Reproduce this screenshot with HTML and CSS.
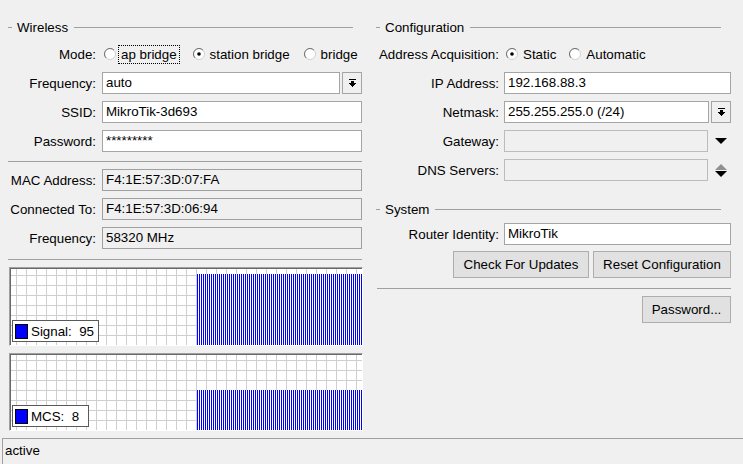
FILE: index.html
```html
<!DOCTYPE html>
<html>
<head>
<meta charset="utf-8">
<link rel="stylesheet" href="styles.css">
</head>
<body>
<div class="app">
  <div class="main">
    <div class="col col-left">
      <div class="group group-left"><span>Wireless</span></div>
      <div class="row row-radios">
        <div class="label">Mode:</div>
        <div class="radios">
          <div class="opt">
            <svg class="radio" viewBox="0 0 12 12" width="12" height="12"><circle cx="6" cy="6" r="5.5" fill="#fff" stroke="#d0d0d0"/><path d="M2.1 9.9A5.5 5.5 0 0 1 9.9 2.1" fill="none" stroke="#707070"/></svg>
            <span class="focus">ap bridge</span>
          </div>
          <div class="opt">
            <svg class="radio" viewBox="0 0 12 12" width="12" height="12"><circle cx="6" cy="6" r="5.5" fill="#fff" stroke="#d0d0d0"/><path d="M2.1 9.9A5.5 5.5 0 0 1 9.9 2.1" fill="none" stroke="#707070"/><circle cx="6" cy="6" r="1.8" fill="#000"/></svg>
            <span>station bridge</span>
          </div>
          <div class="opt">
            <svg class="radio" viewBox="0 0 12 12" width="12" height="12"><circle cx="6" cy="6" r="5.5" fill="#fff" stroke="#d0d0d0"/><path d="M2.1 9.9A5.5 5.5 0 0 1 9.9 2.1" fill="none" stroke="#707070"/></svg>
            <span>bridge</span>
          </div>
        </div>
      </div>
      <div class="row row-first">
        <div class="label">Frequency:</div>
        <div class="field">auto</div>
        <div class="dd"><svg width="7" height="8" viewBox="0 0 7 8" shape-rendering="crispEdges"><rect x="0" y="0" width="7" height="1"/><rect x="2" y="2" width="3" height="2"/><path d="M0 4H7V5H6V6H5V7H4V8H3V7H2V6H1V5H0Z"/></svg></div>
      </div>
      <div class="row">
        <div class="label">SSID:</div>
        <div class="field">MikroTik-3d693</div>
      </div>
      <div class="row">
        <div class="label">Password:</div>
        <div class="field">*********</div>
      </div>
      <div class="sep sep-a"></div>
      <div class="row">
        <div class="label">MAC Address:</div>
        <div class="field ro">F4:1E:57:3D:07:FA</div>
      </div>
      <div class="row">
        <div class="label">Connected To:</div>
        <div class="field ro">F4:1E:57:3D:06:94</div>
      </div>
      <div class="row">
        <div class="label">Frequency:</div>
        <div class="field ro">58320 MHz</div>
      </div>
      <div class="sep sep-b"></div>
      <div class="graph graph-1">
        <div class="bars" style="height:71px"></div>
        <div class="legend legend-signal"><span class="swatch"></span><span>Signal:  95</span></div>
      </div>
      <div class="graph graph-2">
        <div class="bars" style="height:40px"></div>
        <div class="legend legend-mcs"><span class="swatch"></span><span>MCS:  8</span></div>
      </div>
    </div>

    <div class="col col-right">
      <div class="group group-right"><span>Configuration</span></div>
      <div class="row row-radios">
        <div class="label label-r">Address Acquisition:</div>
        <div class="radios radios-r">
          <div class="opt">
            <svg class="radio" viewBox="0 0 12 12" width="12" height="12"><circle cx="6" cy="6" r="5.5" fill="#fff" stroke="#d0d0d0"/><path d="M2.1 9.9A5.5 5.5 0 0 1 9.9 2.1" fill="none" stroke="#707070"/><circle cx="6" cy="6" r="1.8" fill="#000"/></svg>
            <span>Static</span>
          </div>
          <div class="opt">
            <svg class="radio" viewBox="0 0 12 12" width="12" height="12"><circle cx="6" cy="6" r="5.5" fill="#fff" stroke="#d0d0d0"/><path d="M2.1 9.9A5.5 5.5 0 0 1 9.9 2.1" fill="none" stroke="#707070"/></svg>
            <span>Automatic</span>
          </div>
        </div>
      </div>
      <div class="row row-first">
        <div class="label label-r">IP Address:</div>
        <div class="field">192.168.88.3</div>
      </div>
      <div class="row">
        <div class="label label-r">Netmask:</div>
        <div class="field">255.255.255.0 (/24)</div>
        <div class="dd"><svg width="7" height="8" viewBox="0 0 7 8" shape-rendering="crispEdges"><rect x="0" y="0" width="7" height="1"/><rect x="2" y="2" width="3" height="2"/><path d="M0 4H7V5H6V6H5V7H4V8H3V7H2V6H1V5H0Z"/></svg></div>
      </div>
      <div class="row">
        <div class="label label-r">Gateway:</div>
        <div class="field dis"></div>
        <div class="arrows"><svg width="12" height="6" viewBox="0 0 12 6"><path d="M0 0H12L6 6Z"/></svg></div>
      </div>
      <div class="row">
        <div class="label label-r">DNS Servers:</div>
        <div class="field dis"></div>
        <div class="arrows arrows-2">
          <svg width="12" height="6" viewBox="0 0 12 6"><path d="M0 6H12L6 0Z" fill="#909090"/></svg>
          <svg width="12" height="6" viewBox="0 0 12 6"><path d="M0 0H12L6 6Z"/></svg>
        </div>
      </div>
      <div class="group group-right group-system"><span>System</span></div>
      <div class="row">
        <div class="label label-r">Router Identity:</div>
        <div class="field">MikroTik</div>
      </div>
      <div class="btnrow btnrow-a">
        <div class="btn btn-check">Check For Updates</div>
        <div class="btn btn-reset">Reset Configuration</div>
      </div>
      <div class="sep sep-r"></div>
      <div class="btnrow btnrow-b">
        <div class="btn btn-pass">Password...</div>
      </div>
    </div>
  </div>
  <div class="status">active</div>
</div>
</body>
</html>
```

FILE: styles.css
```css
* { box-sizing: border-box; }
html, body { margin: 0; padding: 0; }
body {
  background: #f0f0f0;
  font-family: "Liberation Sans", Arial, sans-serif;
  font-size: 13.33px;
  color: #000;
  width: 743px;
  height: 464px;
  overflow: hidden;
}
.app { display: flex; flex-direction: column; height: 464px; }
.main { display: flex; height: 438px; flex: none; }
.col { display: flex; flex-direction: column; padding-top: 20px; }
.col-left { width: 354px; margin-left: 8px; }
.col-right { width: 355px; margin-left: 14px; }

.group { display: flex; align-items: center; height: 14px; flex: none; }
.group::before { content: ""; width: 4px; border-top: 1px solid #a0a0a0; margin-right: 5px; }
.group::after { content: ""; flex: 1; border-top: 1px solid #a0a0a0; margin-left: 6px; }
.group-left { margin-right: 9px; }
.group-right { margin-right: 10px; }
.group-system { margin-top: 21px; }

.row { display: flex; align-items: center; height: 22px; margin-top: 7px; flex: none; }
.row-radios { height: 20px; margin-top: 10px; }
.row-first { margin-top: 8px; }
.label { width: 88px; margin-right: 6px; text-align: right; white-space: nowrap; flex: none; }
.label-r { width: 123px; margin-right: 5px; }

.radios { display: flex; align-items: center; }
.opt { display: flex; align-items: center; margin-right: 12px; white-space: nowrap; }
.radio { display: block; flex: none; margin-left: 2px; margin-right: 5px; }
.focus { outline: 1px dotted #000; outline-offset: 0; padding: 1px 2px; margin-left: -2px; }
.radios-r .opt { margin-right: 11px; }

.field {
  flex: 1;
  height: 22px;
  border: 1px solid #a5a5a5;
  background: #fff;
  padding: 0 3px;
  line-height: 20px;
  white-space: nowrap;
  overflow: hidden;
}
.field.ro { background: #f0f0f0; border-color: #a0a0a0; }
.field.dis { background: #f0f0f0; border-color: #bcbcbc; flex: none; width: 204px; }

.dd {
  flex: none;
  width: 20px;
  height: 22px;
  margin-left: 2px;
  border: 1px solid #a5a5a5;
  background: #f0f0f0;
  display: flex;
  align-items: center;
  justify-content: center;
}
.dd svg { display: block; }

.arrows { flex: none; width: 23px; padding-left: 7px; display: flex; flex-direction: column; justify-content: center; gap: 1px; }
.arrows svg { display: block; }

.sep { border-top: 1px solid #a0a0a0; height: 0; flex: none; }
.sep-a { margin-top: 9px; }
.sep-b { margin-top: 10px; }
.sep-r { margin-top: 10px; margin-left: 1px; }

.btnrow { display: flex; justify-content: flex-end; gap: 4px; flex: none; }
.btnrow-a { margin-top: 6px; }
.btnrow-b { margin-top: 7px; }
.btn {
  height: 27px;
  border: 1px solid #adadad;
  background: #e1e1e1;
  display: flex;
  align-items: center;
  justify-content: center;
  white-space: nowrap;
}
.btn-check { width: 136px; }
.btn-reset { width: 138px; }
.btn-pass { width: 89px; }

.graph {
  position: relative;
  flex: none;
  margin: 7px -1px 0 1px;
  border: 1px solid;
  border-color: #a0a0a0 #ffffff #ffffff #a0a0a0;
  box-shadow: inset 1px 1px 0 #696969;
  background-color: #fff;
  background-image:
    linear-gradient(to right, #cfcfcf 0 1px, transparent 1px),
    linear-gradient(to bottom, #cfcfcf 0 1px, transparent 1px);
  background-size: 10px 10px;
  background-position: 6px 100%;
}
.graph-1 { height: 79px; }
.graph-2 { height: 78px; }
.bars {
  position: absolute;
  left: 187px;
  right: 0;
  bottom: 0;
  background-color: #ffffff;
  background-image: linear-gradient(to right, #0000ff 50%, #ffffff 50%);
  background-size: 2px 100%;
  background-repeat: repeat-x;
}
.legend {
  position: absolute;
  left: 2px;
  bottom: 3px;
  height: 22px;
  border: 1px solid #5a5a5a;
  background: #fff;
  display: flex;
  align-items: center;
  padding-left: 2px;
  white-space: pre;
}
.legend-signal { width: 87px; }
.legend-mcs { width: 77px; }
.swatch {
  width: 13px;
  height: 15px;
  border: 1px solid #000;
  background: #0000ff;
  margin-right: 3px;
  flex: none;
}

.status {
  flex: none;
  height: 26px;
  margin-left: 2px;
  border-top: 1px solid #a0a0a0;
  border-left: 1px solid #a0a0a0;
  padding-left: 2px;
  line-height: 24px;
}
```
